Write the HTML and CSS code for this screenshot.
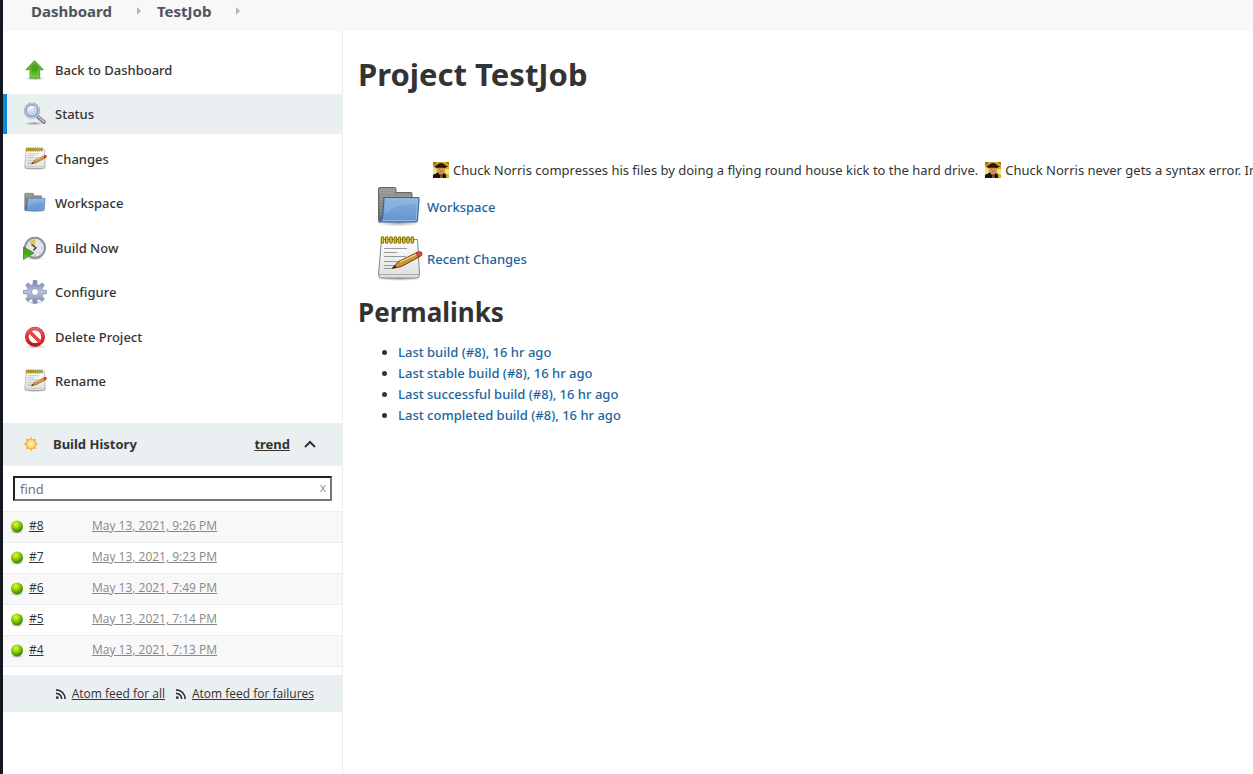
FILE: index.html
```html
<!DOCTYPE html>
<html lang="en">
<head>
<meta charset="utf-8">
<title>TestJob [Jenkins]</title>
<link rel="stylesheet" href="styles.css">
</head>
<body>
<svg class="defs" aria-hidden="true">
  <defs>
    <linearGradient id="green" x1="0" y1="0" x2="0" y2="1"><stop offset="0" stop-color="#5f9d2c"/><stop offset=".5" stop-color="#43a51b"/><stop offset="1" stop-color="#6fd62a"/></linearGradient>
    <linearGradient id="paper" x1="0" y1="0" x2="0" y2="1"><stop offset="0" stop-color="#fff"/><stop offset="1" stop-color="#dedede"/></linearGradient>
    <linearGradient id="blue" x1="0" y1="0" x2="0" y2="1"><stop offset="0" stop-color="#86acd9"/><stop offset="1" stop-color="#6395d0"/></linearGradient>
    <linearGradient id="grey" x1="0" y1="0" x2="0" y2="1"><stop offset="0" stop-color="#999"/><stop offset="1" stop-color="#666"/></linearGradient>
    <linearGradient id="gear" x1="0" y1="0" x2="0" y2="1"><stop offset="0" stop-color="#7383ad"/><stop offset=".5" stop-color="#bcc3e0"/><stop offset="1" stop-color="#8188ad"/></linearGradient>
    <linearGradient id="red" x1="0" y1="0" x2="0" y2="1"><stop offset="0" stop-color="#ee6060"/><stop offset="1" stop-color="#cf0d0d"/></linearGradient>
    <radialGradient id="ball" cx=".4" cy=".3" r=".65"><stop offset="0" stop-color="#eaf52c"/><stop offset=".45" stop-color="#98d40d"/><stop offset="1" stop-color="#3e8a00"/></radialGradient>
    <radialGradient id="lens" cx=".4" cy=".3" r=".8"><stop offset="0" stop-color="#e8f1fb"/><stop offset="1" stop-color="#9bbde8"/></radialGradient>
    <radialGradient id="sun"><stop offset="0" stop-color="#fffccd"/><stop offset="1" stop-color="#ffd64a"/></radialGradient>
    <radialGradient id="shade"><stop offset="0" stop-color="#000" stop-opacity=".35"/><stop offset="1" stop-color="#000" stop-opacity="0"/></radialGradient>
  </defs>
  <symbol id="i-up" viewBox="0 0 24 24">
    <ellipse cx="12" cy="20.500" rx="10" ry="2" fill="url(#shade)"/>
    <path d="M11.500 2.700 20.300 11.700H16.700v8.300H7v-8.300H2.900Z" fill="url(#green)" stroke="#3f8a1a" stroke-width=".8"/>
    <path d="M11.500 4.200 18 10.900H15.700v8.100H8v-8.100H5.200Z" fill="none" stroke="#8fd75c" stroke-width=".6"/>
  </symbol>
  <symbol id="i-search" viewBox="0 0 24 24">
    <ellipse cx="11" cy="21.500" rx="10" ry="2" fill="url(#shade)"/>
    <path d="m15 15 6 5" stroke="#808080" stroke-width="3.600" stroke-linecap="round"/>
    <path d="m15.500 15 5.300 4.500" stroke="#c6c6c6" stroke-width="1.600" stroke-linecap="round"/>
    <circle cx="9" cy="8.700" r="7" fill="url(#lens)" stroke="#999b9d" stroke-width="2.200"/>
    <circle cx="9" cy="8.700" r="7" fill="none" stroke="#e4e6e8" stroke-width="1"/>
    <circle cx="9" cy="8.700" r="5.800" fill="none" stroke="#6587bb" stroke-width=".8"/>
    <path d="M5 9c0-3 2-5 5-5 2 0 3 1 3 1-4 0-6 2-8 4Z" fill="#fff" opacity=".65"/>
  </symbol>
  <symbol id="i-note" viewBox="0 0 48 48">
    <ellipse cx="24" cy="43.500" rx="23" ry="2.500" fill="url(#shade)"/>
    <path d="M6.500 4.500h36l2 35q0 3.500-3 3.500H6.500q-3 0-3-3.500Z" fill="url(#paper)" stroke="#858585"/>
    <path d="M4 39.500h40" stroke="#a8a8a8" stroke-width="1"/>
    <path d="M9 13.500h23M9 17.500h13M9 21.500h22M9 26.500h22M9 30.500h15M9 33.500h9" stroke="#999" stroke-width="1"/>
    <path d="M7.500 3v4M11.800 3v4M16 3v4M20.300 3v4M24.500 3v4M28.800 3v4M33 3v4M37.300 3v4" stroke="#7f6a00" stroke-width="3.600" stroke-linecap="round"/>
    <path d="M7.500 3v4M11.800 3v4M16 3v4M20.300 3v4M24.500 3v4M28.800 3v4M33 3v4M37.300 3v4" stroke="#e2c92f" stroke-width="1.600" stroke-linecap="round"/>
    <path d="m17 33.500 6.500-7L42 17.500q4-1.500 5 .7 0 2.300-3 3.800L26.500 31.500Z" fill="#cf9138" stroke="#714508"/>
    <path d="m25 27 16-7.500" stroke="#efc47a" stroke-width="1.600"/>
    <path d="m41.500 17.700 2-.9q3-.5 3.500 1.700t-3 3.500l-1 .5Z" fill="#e04848" stroke="#9a2222" stroke-width=".7"/>
    <path d="m17 33.500 3-3.400 1.500 2.200Z" fill="#222"/>
  </symbol>
  <symbol id="i-folder" viewBox="0 0 48 48">
    <ellipse cx="23.500" cy="40" rx="22" ry="3.500" fill="url(#shade)"/>
    <path d="M3.500 38V6q0-1.500 1.500-1.500h14.500q1.500 0 1.500 1.500v3.500h15q1 0 1 1V38Z" fill="url(#grey)" stroke="#666"/>
    <path d="M5 7h14M5 10h14M5 13h31M5 16h3M5 19h3M5 22h3M5 25h3M5 28h3M5 31h3" stroke="#aaa" stroke-width=".8"/>
    <path d="M9 14.500H43q1 0 1 1L42.500 37q-.3 2-2 2H4.500q2.500-1.500 3-5Z" fill="url(#blue)" stroke="#3566a4" stroke-width="1.200"/>
    <path d="M10 16H42.700L41.300 36q-.2 1.500-1.400 1.500H7.400" fill="none" stroke="#a5c3e8" stroke-width=".8"/>
    <path d="M10.300 16.500H42.300L42 21Q21 21 9.500 31Z" fill="#fff" opacity=".12"/>
  </symbol>
  <symbol id="i-build" viewBox="0 0 24 24">
    <ellipse cx="12" cy="22.500" rx="9" ry="1.500" fill="url(#shade)"/>
    <circle cx="12" cy="11.700" r="10" fill="#e4e5e9" stroke="#73737c" stroke-width="1.800"/>
    <circle cx="12" cy="11.700" r="10.100" fill="none" stroke="#b5b2d0" stroke-width=".7"/>
    <path d="M11.500 11 6.500 6q2.500-2.500 5.500-2.500Z" fill="#e9c65b" stroke="#b99433" stroke-width=".4"/>
    <path d="m8.500 8.500 4.500 3.300-2.500 2.500" fill="none" stroke="#333" stroke-width="1.300"/>
    <path d="M20 12h-1.500M17.700 6.300l-1 1M17.700 17.300l-1-1M12 20v-1.500" stroke="#aaa"/>
    <path d="M.5 11 11 17 .5 23.300Z" fill="url(#green)" stroke="#358814" stroke-width=".8"/>
  </symbol>
  <symbol id="i-gear" viewBox="0 0 24 24">
    <ellipse cx="12" cy="22.500" rx="9" ry="1.500" fill="url(#shade)"/>
    <path fill-rule="evenodd" d="M10.300.5h3.400l.4 4.200 1.700.8 3.400-2.600 2.200 2.300-2.500 3.200.7 1.700 4 .5v3l-4 .7-.7 1.700 2.600 3.100-2.300 2.200-3.400-2.400-1.600.7-.7 3.700h-3.200l-.6-3.800-1.700-.7L5 21.400l-2.300-2.200 2.300-3.300-.7-1.700-4-.5v-3l4-.6.7-1.700-2.300-3.100L5 2.900l3.300 2.500 1.600-.7ZM12 8.400a3.500 3.500 0 1 0 0 7 3.500 3.500 0 0 0 0-7Z" fill="url(#gear)" stroke="#7c84a8" stroke-width=".7"/>
  </symbol>
  <symbol id="i-no" viewBox="0 0 24 24">
    <ellipse cx="12" cy="21.500" rx="10" ry="2" fill="url(#shade)"/>
    <circle cx="12" cy="11.700" r="8.200" fill="#fff" fill-opacity=".9" stroke="#c02a2a" stroke-width="3.600"/>
    <path d="m6 6 12 12" stroke="#c62a2a" stroke-width="3.200"/>
    <circle cx="12" cy="11.700" r="8.200" fill="none" stroke="url(#red)" stroke-width="2.600"/>
    <path d="m6.300 6.300 11.400 11.400" stroke="#e84c4c" stroke-width="2.200"/>
  </symbol>
  <symbol id="i-sun" viewBox="0 0 16 16">
    <path d="m8 .8 1.300 2.700L12.800 2.700 12.400 5.900 15.200 7.800 12.500 9.700 13.300 13 9.800 12.500 8 15.300 6.200 12.500 2.800 13.200 3.500 9.800.8 8 3.500 6 2.700 2.700 6.500 3.500Z" fill="#f9a94a"/>
    <circle cx="8" cy="8" r="4.500" fill="url(#sun)" stroke="#f3b73b" stroke-width=".8"/>
  </symbol>
  <symbol id="i-ball" viewBox="0 0 16 16">
    <ellipse cx="8" cy="14" rx="7" ry="2" fill="url(#shade)"/>
    <circle cx="8" cy="8.500" r="6" fill="url(#ball)"/>
  </symbol>
  <symbol id="i-rss" viewBox="0 0 12 12">
    <circle cx="2.300" cy="9.700" r="1.400" fill="#333"/>
    <path d="M1 5.300a5.700 5.700 0 0 1 5.700 5.700M1 1.800A9.200 9.200 0 0 1 10.200 11" fill="none" stroke="#333" stroke-width="1.700"/>
  </symbol>
  <symbol id="i-chuck" viewBox="0 0 16 16">
    <path d="M0 0h16v16H0Z" fill="#d3a92f"/>
    <path d="M0 0h4L2 3H0ZM12 0h4v3Z" fill="#a87510"/>
    <path d="M0 5 4 7 3 12H0ZM12 7h4v6l-4-2Z" fill="#f4e08a"/>
    <path d="M1 4Q4 4 5 2 8 0 11 2 12 4 15 4 13 6.500 8 6.500 3 6.500 1 4Z" fill="#2a170b"/>
    <path d="M5 5.800h6V9q-1 3-3 3T5 9Z" fill="#d99761"/>
    <path d="M5.500 7h2M9 7h1.500M6.500 9.600h3" stroke="#a56c45" stroke-width=".8"/>
    <path d="M0 13 5 10.500 8 14l3-3 2 2v3H0Z" fill="#17120b"/>
    <path d="M7 12h2l1 4H7Z" fill="#875328"/>
  </symbol>
</svg>

<header class="breadcrumbs">
  <nav aria-label="Breadcrumbs">
    <a href="#">Dashboard</a><span class="arrow"></span><a href="#">TestJob</a><span class="arrow"></span>
  </nav>
</header>

<div class="page">
  <aside class="side">
    <ul class="tasks">
      <li><a class="task" href="#"><svg class="icon"><use href="#i-up"/></svg>Back to Dashboard</a></li>
      <li><a class="task active" href="#"><svg class="icon"><use href="#i-search"/></svg>Status</a></li>
      <li><a class="task" href="#"><svg class="icon"><use href="#i-note"/></svg>Changes</a></li>
      <li><a class="task" href="#"><svg class="icon"><use href="#i-folder"/></svg>Workspace</a></li>
      <li><a class="task" href="#"><svg class="icon"><use href="#i-build"/></svg>Build Now</a></li>
      <li><a class="task" href="#"><svg class="icon"><use href="#i-gear"/></svg>Configure</a></li>
      <li><a class="task" href="#"><svg class="icon"><use href="#i-no"/></svg>Delete Project</a></li>
      <li><a class="task" href="#"><svg class="icon"><use href="#i-note"/></svg>Rename</a></li>
    </ul>

    <section class="history">
      <div class="history-head">
        <svg class="icon-small"><use href="#i-sun"/></svg>
        <h2 class="history-title">Build History</h2>
        <a class="trend" href="#">trend</a>
        <button class="collapse" type="button" aria-label="Collapse"><svg class="chevron" viewBox="0 0 12 8"><path d="m1 7 5-5 5 5" fill="none" stroke="#333" stroke-width="2"/></svg></button>
      </div>
      <div class="search">
        <input class="find" type="text" placeholder="find" aria-label="find">
        <button class="clear" type="button" aria-label="Clear">x</button>
      </div>
      <table class="builds">
        <tbody>
          <tr><td class="num"><span class="build"><svg class="icon-small"><use href="#i-ball"/></svg><a href="#">#8</a></span></td><td><a class="date" href="#">May 13, 2021, 9:26 PM</a></td></tr>
          <tr><td class="num"><span class="build"><svg class="icon-small"><use href="#i-ball"/></svg><a href="#">#7</a></span></td><td><a class="date" href="#">May 13, 2021, 9:23 PM</a></td></tr>
          <tr><td class="num"><span class="build"><svg class="icon-small"><use href="#i-ball"/></svg><a href="#">#6</a></span></td><td><a class="date" href="#">May 13, 2021, 7:49 PM</a></td></tr>
          <tr><td class="num"><span class="build"><svg class="icon-small"><use href="#i-ball"/></svg><a href="#">#5</a></span></td><td><a class="date" href="#">May 13, 2021, 7:14 PM</a></td></tr>
          <tr><td class="num"><span class="build"><svg class="icon-small"><use href="#i-ball"/></svg><a href="#">#4</a></span></td><td><a class="date" href="#">May 13, 2021, 7:13 PM</a></td></tr>
        </tbody>
      </table>
      <div class="feeds">
        <span class="feed"><svg class="rss"><use href="#i-rss"/></svg><a href="#">Atom feed for all</a></span>
        <span class="feed"><svg class="rss"><use href="#i-rss"/></svg><a href="#">Atom feed for failures</a></span>
      </div>
    </section>
  </aside>

  <main class="main">
    <h1>Project TestJob</h1>
    <div class="facts">
      <svg class="chuck"><use href="#i-chuck"/></svg><span class="fact">Chuck Norris compresses his files by doing a flying round house kick to the hard drive.</span><svg class="chuck"><use href="#i-chuck"/></svg><span class="fact">Chuck Norris never gets a syntax error. Instead, the language gets a DoesNotConformToChuck error.</span>
    </div>
    <a class="big-link" href="#"><svg class="icon-large"><use href="#i-folder"/></svg>Workspace</a>
    <a class="big-link" href="#"><svg class="icon-large"><use href="#i-note"/></svg>Recent Changes</a>
    <h2 class="section-title">Permalinks</h2>
    <ul class="permalinks">
      <li><a href="#">Last build (#8), 16 hr ago</a></li>
      <li><a href="#">Last stable build (#8), 16 hr ago</a></li>
      <li><a href="#">Last successful build (#8), 16 hr ago</a></li>
      <li><a href="#">Last completed build (#8), 16 hr ago</a></li>
    </ul>
  </main>
</div>
</body>
</html>
```
FILE: styles.css
```css
* { box-sizing: border-box; }

body {
  margin: 0;
  min-height: 100vh;
  display: flex;
  flex-direction: column;
  border-left: 3px solid #14171f;
  background: #fff;
  color: #333;
  font: 13px/20px "Noto Sans", "Open Sans", sans-serif;
}

.defs { position: absolute; width: 0; height: 0; }

svg { display: block; flex: none; }

ul { list-style: none; margin: 0; padding: 0; }

button { border: 0; padding: 0; background: none; font: inherit; }

.breadcrumbs {
  height: 31px;
  padding: 0 28px;
  background: #f8f8f8;
}

.breadcrumbs nav { display: flex; align-items: center; height: 22px; }

.breadcrumbs a {
  color: #4d545d;
  font-size: 15px;
  font-weight: 700;
  text-decoration: none;
}

.arrow {
  margin: 0 16px 0 25px;
  border: 4px solid transparent;
  border-left: 4px solid #b5b5b5;
  border-right: 0;
}

.page { flex: 1; display: flex; }

.side {
  flex: none;
  width: 340px;
  padding-top: 19px;
  border-right: 1px solid #eaeff2;
}

.tasks li { margin-bottom: 4px; }
.tasks li:nth-child(even) { margin-bottom: 5px; }

.task {
  display: flex;
  align-items: center;
  gap: 8px;
  height: 40px;
  padding-left: 16px;
  border-left: 4px solid transparent;
  color: #333;
  font-weight: 500;
  text-decoration: none;
}

.active { background: #eaeff2; border-left-color: #0b8bd6; }

.icon { width: 24px; height: 24px; }
.icon-small { width: 16px; height: 16px; }
.icon-large { width: 48px; height: 48px; }

.history { padding-top: 17px; }

.history-head {
  display: flex;
  align-items: center;
  height: 43px;
  padding: 0 26px 2px 20px;
  background: #eaeff2;
}

.history-title {
  flex: 1;
  margin: 0 0 0 14px;
  font-size: 13px;
  font-weight: 700;
}

.trend { margin-right: 14px; color: #333; font-weight: 700; }
.chevron { width: 12px; height: 8px; }

.search { position: relative; padding: 10px; }

.find {
  display: block;
  width: 100%;
  height: 25px;
  padding: 0 20px 0 5px;
  border: 2px inset #767676;
  background: #fff;
  font: inherit;
}

.find::placeholder { color: #757575; }

.clear {
  position: absolute;
  top: 12px;
  right: 16px;
  color: #999;
  font-size: 12px;
  line-height: 20px;
}

.builds { width: 100%; border-collapse: collapse; font-family: "Open Sans", "Noto Sans", sans-serif; font-size: 12px; }
.builds tr { height: 31px; border-top: 1px solid #eaeff2; border-bottom: 1px solid #eaeff2; }
.builds tr:nth-child(odd) { background: #f8f8f8; }
.builds td { padding: 0 0 2px; line-height: 16px; }
.builds .num { width: 89px; padding-left: 6px; }
.builds a { color: #333; }
.builds .date { color: #888; }
.build { display: flex; align-items: center; gap: 4px; }

.feeds {
  display: flex;
  justify-content: flex-end;
  align-items: center;
  gap: 10px;
  height: 37px;
  margin-top: 8px;
  padding-right: 28px;
  background: #eaeff2;
  font-family: "Open Sans", "Noto Sans", sans-serif;
  font-size: 12px;
}

.feed { display: flex; align-items: center; gap: 5px; }
.feed a { color: #333; }
.rss { width: 12px; height: 12px; }

.main { flex: 1; min-width: 0; padding: 23px 0 0 15px; }

h1 { margin: 0; font-size: 31px; line-height: 40px; font-weight: 700; }

.facts {
  display: flex;
  align-items: center;
  height: 20px;
  margin: 66px 0 1px 75px;
  overflow: hidden;
  white-space: nowrap;
}

.chuck { width: 16px; height: 16px; }
.fact { padding: 0 7px 0 4px; }

.big-link {
  display: flex;
  align-items: center;
  gap: 4px;
  width: max-content;
  height: 52px;
  margin-left: 17px;
}

.main a { color: #1a659e; font-weight: 500; text-decoration: none; }

.section-title { margin: 9px 0 12px; font-size: 26px; line-height: 36px; font-weight: 700; }

.permalinks { padding-left: 40px; list-style: disc; line-height: 21px; }
```
